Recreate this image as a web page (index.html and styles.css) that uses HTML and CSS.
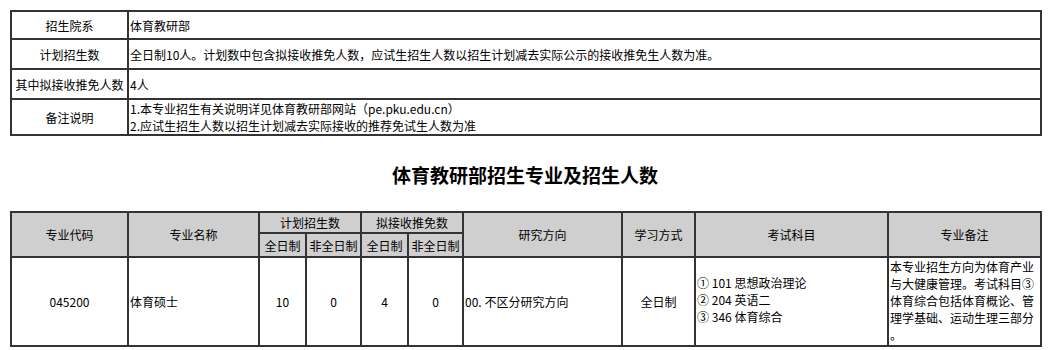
FILE: index.html
```html
<!DOCTYPE html>
<html lang="zh-CN">
<head>
<meta charset="utf-8">
<title>体育教研部招生专业及招生人数</title>
<link rel="stylesheet" href="styles.css">
</head>
<body>
<table class="info">
  <colgroup><col class="c-label"><col class="c-value"></colgroup>
  <tr class="r1"><td class="label">招生院系</td><td class="value">体育教研部</td></tr>
  <tr class="r2"><td class="label">计划招生数</td><td class="value">全日制10人。计划数中包含拟接收推免人数，应试生招生人数以招生计划减去实际公示的接收推免生人数为准。</td></tr>
  <tr class="r3"><td class="label">其中拟接收推免人数</td><td class="value">4人</td></tr>
  <tr class="r4"><td class="label">备注说明</td><td class="value">1.本专业招生有关说明详见体育教研部网站（pe.pku.edu.cn）<br>2.应试生招生人数以招生计划减去实际接收的推荐免试生人数为准</td></tr>
</table>

<h1 class="title">体育教研部招生专业及招生人数</h1>

<table class="majors">
  <colgroup>
    <col style="width:117px"><col style="width:131px"><col style="width:47px"><col style="width:55px"><col style="width:47px"><col style="width:55px"><col style="width:159px"><col style="width:73px"><col style="width:193px"><col style="width:153px">
  </colgroup>
  <tr class="h1">
    <th rowspan="2">专业代码</th>
    <th rowspan="2">专业名称</th>
    <th colspan="2">计划招生数</th>
    <th colspan="2">拟接收推免数</th>
    <th rowspan="2">研究方向</th>
    <th rowspan="2">学习方式</th>
    <th rowspan="2">考试科目</th>
    <th rowspan="2">专业备注</th>
  </tr>
  <tr class="h2">
    <th>全日制</th><th>非全日制</th><th>全日制</th><th>非全日制</th>
  </tr>
  <tr class="data">
    <td class="center">045200</td>
    <td class="left">体育硕士</td>
    <td class="center">10</td>
    <td class="center">0</td>
    <td class="center">4</td>
    <td class="center">0</td>
    <td class="left">00. 不区分研究方向</td>
    <td class="center">全日制</td>
    <td class="left subjects">① 101 思想政治理论<br>② 204 英语二<br>③ 346 体育综合</td>
    <td class="left top">本专业招生方向为体育产业<br>与大健康管理。考试科目③<br>体育综合包括体育概论、管<br>理学基础、运动生理三部分<br>。</td>
  </tr>
</table>
</body>
</html>
```

FILE: styles.css
```css
body {
  margin: 0;
  padding: 10px;
  background: #fff;
  color: #000;
  font-family: "Noto Sans CJK SC", "Noto Sans", sans-serif;
  font-size: 12px;
}

table {
  border-collapse: collapse;
  table-layout: fixed;
  width: 1030px;
}

td, th {
  border: 2px solid #333;
  padding: 0 1px;
  line-height: 17px;
  font-weight: normal;
  white-space: nowrap;
  overflow: hidden;
}

.c-label { width: 117px; }
.c-value { width: 913px; }

.info .label { text-align: center; }
.info .value { text-align: left; }
.info .r1 td { height: 26px; }
.info .r2 td { height: 28px; }
.info .r3 td { height: 28px; }
.info .r4 td { height: 32px; }

.title {
  margin: 26px 0 23px;
  width: 1030px;
  text-align: center;
  font-size: 19px;
  line-height: 26px;
  font-weight: bold;
}

.majors th {
  background: #cfcfcf;
  text-align: center;
}
.majors .h1 th { height: 19px; }
.majors .h2 th { height: 22px; }
.majors .data td { height: 83px; }
.majors .subjects { padding-bottom: 4px; }

.center { text-align: center; }
.left { text-align: left; }
.top { vertical-align: top; }
```
